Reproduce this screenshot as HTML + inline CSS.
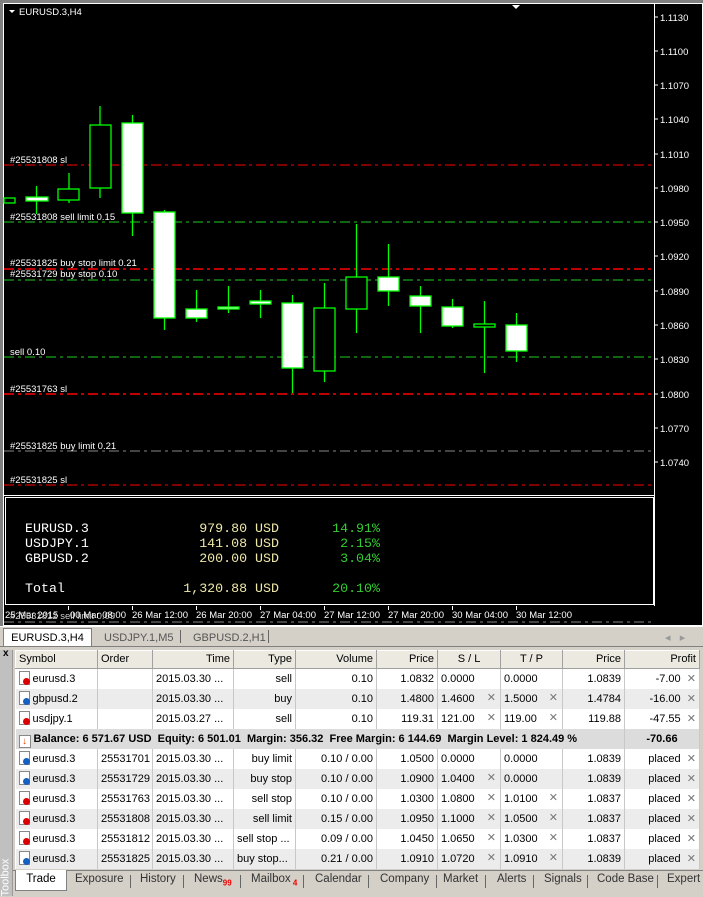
<!DOCTYPE html>
<html><head><meta charset="utf-8"><style>
*{margin:0;padding:0;box-sizing:border-box}
body{width:703px;height:896px;overflow:hidden;background:#d4d0c8;font-family:"Liberation Sans",sans-serif;font-size:11px;position:relative}
#chart{position:absolute;left:0;top:0}
.tabs1{position:absolute;left:0;top:626px;width:703px;height:20px;background:#d4d0c8;border-top:1px solid #fff}
.tab{position:absolute;top:3px;height:17px;line-height:16px;font-size:11px;color:#555}
table{position:absolute;left:15px;top:650px;border-collapse:collapse;width:684px;table-layout:fixed;background:#fff}
td,th{height:20px;line-height:18px;border-right:1px solid #c8c8c8;font-size:11px;padding:0 3px;white-space:nowrap;overflow:hidden;color:#000;font-weight:normal;text-align:right}
th{height:18px;line-height:15px;background:#ece9e1;border:1px solid #a0a0a0;border-top:1px solid #fff;border-left:1px solid #fff}
tr.g td{background:#ececec}
td.l,th.l{text-align:left}
td.s{position:relative;text-align:left}
.x{color:#777;position:absolute;right:4px;top:0}
.ic{display:inline-block;width:11px;height:14px;border:1px solid #888;background:#fff;vertical-align:-3px;margin-right:3px;position:relative}
.ic i{position:absolute;left:3px;top:6px;width:7px;height:7px;border-radius:50%}
.r i{background:#d00}.b i{background:#1560c0}
.bal td{background:#dcdcdc;font-weight:bold}
.bottom{position:absolute;left:13px;top:870px;width:690px;height:21px;border-top:1px solid #808080}
.bt{position:absolute;top:2px;font-size:11.5px;color:#333}
.sep{position:absolute;top:4px;width:1px;height:13px;background:#666}
</style></head><body>
<svg id="chart" width="703" height="626" xmlns="http://www.w3.org/2000/svg" font-family="Liberation Sans, sans-serif">
<rect x="0" y="0" width="703" height="626" fill="#000"/>
<rect x="0" y="0" width="703" height="3" fill="#808080"/>
<rect x="0" y="0" width="3" height="626" fill="#808080"/>
<rect x="3.5" y="3.5" width="699" height="622" fill="none" stroke="#fff" stroke-width="1"/>
<line x1="654.5" y1="4" x2="654.5" y2="606" stroke="#fff"/>
<rect x="5.5" y="497.5" width="648" height="107" fill="none" stroke="#fff"/>
<line x1="4" y1="495.5" x2="654" y2="495.5" stroke="#fff"/>
<g stroke-width="1.3" fill="none">
<line x1="4" y1="165" x2="654" y2="165" stroke="#f00" stroke-dasharray="10,4,3,4" stroke-width="1"/>
<line x1="4" y1="222" x2="654" y2="222" stroke="#2c2" stroke-dasharray="10,4,3,4" stroke-width="1"/>
<line x1="4" y1="269" x2="654" y2="269" stroke="#f00" stroke-dasharray="10,4,3,4" stroke-width="1.5"/>
<line x1="4" y1="280" x2="654" y2="280" stroke="#2c2" stroke-dasharray="10,4,3,4" stroke-width="1"/>
<line x1="4" y1="357" x2="654" y2="357" stroke="#2c2" stroke-dasharray="10,4,3,4" stroke-width="1"/>
<line x1="4" y1="394" x2="654" y2="394" stroke="#f00" stroke-dasharray="10,4,3,4" stroke-width="1.5"/>
<line x1="4" y1="451" x2="654" y2="451" stroke="#888" stroke-dasharray="10,4,3,4" stroke-width="1"/>
<line x1="4" y1="485" x2="654" y2="485" stroke="#f00" stroke-dasharray="10,4,3,4" stroke-width="1"/>
</g>
<g stroke="#0f0" stroke-width="1.3">
<line x1="36.5" y1="186" x2="36.5" y2="214"/><line x1="69" y1="173" x2="69" y2="203"/>
<line x1="100" y1="106" x2="100" y2="198"/><line x1="132.5" y1="115" x2="132.5" y2="236"/>
<line x1="164.5" y1="210" x2="164.5" y2="330"/><line x1="196.5" y1="290" x2="196.5" y2="322"/>
<line x1="228.5" y1="286" x2="228.5" y2="313"/><line x1="260.5" y1="290" x2="260.5" y2="318"/>
<line x1="292.5" y1="295" x2="292.5" y2="393"/><line x1="324.5" y1="283" x2="324.5" y2="382"/>
<line x1="356.5" y1="224" x2="356.5" y2="333"/><line x1="388.5" y1="244" x2="388.5" y2="306"/>
<line x1="420.5" y1="286" x2="420.5" y2="333"/><line x1="452.5" y1="299" x2="452.5" y2="328"/>
<line x1="484.5" y1="301" x2="484.5" y2="373"/><line x1="516.5" y1="313" x2="516.5" y2="362"/>
</g>
<g stroke="#0f0" stroke-width="1.3">
<rect x="4" y="198" width="11" height="5" fill="#000"/>
<rect x="26" y="197" width="22" height="4" fill="#fff"/>
<rect x="58" y="189" width="21" height="11" fill="#000"/>
<rect x="90" y="125" width="21" height="63" fill="#000"/>
<rect x="122" y="123" width="21" height="90" fill="#fff"/>
<rect x="154" y="212" width="21" height="106" fill="#fff"/>
<rect x="186" y="309" width="21" height="9" fill="#fff"/>
<rect x="218" y="307" width="21" height="2" fill="#fff"/>
<rect x="250" y="301" width="21" height="3" fill="#fff"/>
<rect x="282" y="303" width="21" height="65" fill="#fff"/>
<rect x="314" y="308" width="21" height="63" fill="#000"/>
<rect x="346" y="277" width="21" height="32" fill="#000"/>
<rect x="378" y="277" width="21" height="14" fill="#fff"/>
<rect x="410" y="296" width="21" height="10" fill="#fff"/>
<rect x="442" y="307" width="21" height="19" fill="#fff"/>
<rect x="474" y="324" width="21" height="3" fill="#000"/>
<rect x="506" y="325" width="21" height="26" fill="#fff"/>
</g>
<g fill="#fff" font-size="9.5">
<path d="M9 10 L15 10 L12 13Z"/>
<text x="19" y="15">EURUSD.3,H4</text>
<text x="10" y="163">#25531808 sl</text>
<text x="10" y="220">#25531808 sell limit 0.15</text>
<text x="10" y="266">#25531825 buy stop limit 0.21</text>
<text x="10" y="277">#25531729 buy stop 0.10</text>
<text x="10" y="355">sell 0.10</text>
<text x="10" y="392">#25531763 sl</text>
<text x="10" y="449">#25531825 buy limit 0.21</text>
<text x="10" y="483">#25531825 sl</text>
</g>
<path d="M512 5 L520 5 L516 9Z" fill="#fff"/>
<g fill="#fff" font-size="9.5">
<text x="660" y="21">1.1130</text><text x="660" y="55">1.1100</text><text x="660" y="89">1.1070</text>
<text x="660" y="123">1.1040</text><text x="660" y="158">1.1010</text><text x="660" y="192">1.0980</text>
<text x="660" y="226">1.0950</text><text x="660" y="260">1.0920</text><text x="660" y="295">1.0890</text>
<text x="660" y="329">1.0860</text><text x="660" y="363">1.0830</text><text x="660" y="398">1.0800</text>
<text x="660" y="432">1.0770</text><text x="660" y="466">1.0740</text>
</g>
<g stroke="#fff"><line x1="654" y1="17" x2="658" y2="17"/><line x1="654" y1="51" x2="658" y2="51"/><line x1="654" y1="85" x2="658" y2="85"/><line x1="654" y1="119" x2="658" y2="119"/><line x1="654" y1="154" x2="658" y2="154"/><line x1="654" y1="188" x2="658" y2="188"/><line x1="654" y1="222" x2="658" y2="222"/><line x1="654" y1="256" x2="658" y2="256"/><line x1="654" y1="291" x2="658" y2="291"/><line x1="654" y1="325" x2="658" y2="325"/><line x1="654" y1="359" x2="658" y2="359"/><line x1="654" y1="394" x2="658" y2="394"/><line x1="654" y1="428" x2="658" y2="428"/><line x1="654" y1="462" x2="658" y2="462"/></g>
<g font-family="Liberation Mono, monospace" font-size="13.3">
<g fill="#fff"><text x="25" y="532">EURUSD.3</text><text x="25" y="547">USDJPY.1</text><text x="25" y="562">GBPUSD.2</text><text x="25" y="592">Total</text></g>
<g fill="#eee8aa" text-anchor="end"><text x="279" y="532">979.80 USD</text><text x="279" y="547">141.08 USD</text><text x="279" y="562">200.00 USD</text><text x="279" y="592">1,320.88 USD</text></g>
<g fill="#3c3" text-anchor="end"><text x="380" y="532">14.91%</text><text x="380" y="547">2.15%</text><text x="380" y="562">3.04%</text><text x="380" y="592">20.10%</text></g>
</g>
<g stroke="#fff"><line x1="68.5" y1="606" x2="68.5" y2="610"/><line x1="132.5" y1="606" x2="132.5" y2="610"/><line x1="196.5" y1="606" x2="196.5" y2="610"/><line x1="260.5" y1="606" x2="260.5" y2="610"/><line x1="324.5" y1="606" x2="324.5" y2="610"/><line x1="388.5" y1="606" x2="388.5" y2="610"/><line x1="452.5" y1="606" x2="452.5" y2="610"/><line x1="516.5" y1="606" x2="516.5" y2="610"/></g>
<line x1="4" y1="622" x2="654" y2="622" stroke="#888" stroke-dasharray="10,4,3,4"/>
<g fill="#fff" font-size="9.5">
<text x="5" y="618">25 Mar 2015</text><text x="10" y="619" fill="#ccc">#25531812 sell limit 0.09</text><text x="70" y="618">00 Mar 08:00</text>
<text x="132" y="618">26 Mar 12:00</text><text x="196" y="618">26 Mar 20:00</text><text x="260" y="618">27 Mar 04:00</text>
<text x="324" y="618">27 Mar 12:00</text><text x="388" y="618">27 Mar 20:00</text><text x="452" y="618">30 Mar 04:00</text><text x="516" y="618">30 Mar 12:00</text>
</g>
</svg>
<div class="tabs1">
<div style="position:absolute;left:3px;top:1px;width:89px;height:19px;background:#fff;border:1px solid #808080;border-bottom:none;font-size:11px;line-height:18px;text-align:center;color:#000">EURUSD.3,H4</div>
<div class="tab" style="left:104px">USDJPY.1,M5</div>
<div class="sep" style="left:180px;top:3px"></div>
<div class="tab" style="left:193px">GBPUSD.2,H1</div>
<div class="sep" style="left:268px;top:3px"></div>
<div class="tab" style="left:665px;color:#999">◂ &nbsp; ▸</div>
</div>
<div style="position:absolute;left:0;top:646px;width:703px;height:4px;background:#d4d0c8;border-top:1px solid #808080"></div>
<div style="position:absolute;left:0;top:650px;width:13px;height:246px;background:#c0c0c0;border-right:1px solid #999"></div>
<div style="position:absolute;left:3px;top:648px;font-size:10px;font-weight:bold">x</div>
<div style="position:absolute;left:-16px;top:868px;transform:rotate(-90deg);font-size:11px;color:#fff;width:44px;height:13px;line-height:13px">Toolbox</div>
<table>
<colgroup><col style="width:82px"><col style="width:55px"><col style="width:81px"><col style="width:62px"><col style="width:81px"><col style="width:61px"><col style="width:63px"><col style="width:62px"><col style="width:62px"><col style="width:75px"></colgroup>
<tr><th class="l">Symbol</th><th class="l">Order</th><th>Time</th><th>Type</th><th>Volume</th><th>Price</th><th style="text-align:center">S / L</th><th style="text-align:center">T / P</th><th>Price</th><th>Profit</th></tr>
<tr><td class="l"><span class="ic r"><i></i></span>eurusd.3</td><td></td><td class="l">2015.03.30 ...</td><td>sell</td><td>0.10</td><td>1.0832</td><td class="s">0.0000</td><td class="s">0.0000</td><td>1.0839</td><td>-7.00 &nbsp;<span style="color:#777">✕</span></td></tr>
<tr class="g"><td class="l"><span class="ic b"><i></i></span>gbpusd.2</td><td></td><td class="l">2015.03.30 ...</td><td>buy</td><td>0.10</td><td>1.4800</td><td class="s">1.4600<span class="x">✕</span></td><td class="s">1.5000<span class="x">✕</span></td><td>1.4784</td><td>-16.00 &nbsp;<span style="color:#777">✕</span></td></tr>
<tr><td class="l"><span class="ic r"><i></i></span>usdjpy.1</td><td></td><td class="l">2015.03.27 ...</td><td>sell</td><td>0.10</td><td>119.31</td><td class="s">121.00<span class="x">✕</span></td><td class="s">119.00<span class="x">✕</span></td><td>119.88</td><td>-47.55 &nbsp;<span style="color:#777">✕</span></td></tr>
<tr class="bal"><td colspan="9" class="l"><span style="display:inline-block;width:12px;height:13px;border:1px solid #888;background:#fff;color:#e04000;font-size:10px;line-height:11px;text-align:center;vertical-align:-2px">↓</span> Balance: 6 571.67 USD&nbsp; Equity: 6 501.01&nbsp; Margin: 356.32&nbsp; Free Margin: 6 144.69&nbsp; Margin Level: 1 824.49 %</td><td style="text-align:center">-70.66</td></tr>
<tr><td class="l"><span class="ic b"><i></i></span>eurusd.3</td><td class="l">25531701</td><td class="l">2015.03.30 ...</td><td>buy limit</td><td>0.10 / 0.00</td><td>1.0500</td><td class="s">0.0000</td><td class="s">0.0000</td><td>1.0839</td><td>placed &nbsp;<span style="color:#777">✕</span></td></tr>
<tr class="g"><td class="l"><span class="ic b"><i></i></span>eurusd.3</td><td class="l">25531729</td><td class="l">2015.03.30 ...</td><td>buy stop</td><td>0.10 / 0.00</td><td>1.0900</td><td class="s">1.0400<span class="x">✕</span></td><td class="s">0.0000</td><td>1.0839</td><td>placed &nbsp;<span style="color:#777">✕</span></td></tr>
<tr><td class="l"><span class="ic r"><i></i></span>eurusd.3</td><td class="l">25531763</td><td class="l">2015.03.30 ...</td><td>sell stop</td><td>0.10 / 0.00</td><td>1.0300</td><td class="s">1.0800<span class="x">✕</span></td><td class="s">1.0100<span class="x">✕</span></td><td>1.0837</td><td>placed &nbsp;<span style="color:#777">✕</span></td></tr>
<tr class="g"><td class="l"><span class="ic r"><i></i></span>eurusd.3</td><td class="l">25531808</td><td class="l">2015.03.30 ...</td><td>sell limit</td><td>0.15 / 0.00</td><td>1.0950</td><td class="s">1.1000<span class="x">✕</span></td><td class="s">1.0500<span class="x">✕</span></td><td>1.0837</td><td>placed &nbsp;<span style="color:#777">✕</span></td></tr>
<tr><td class="l"><span class="ic r"><i></i></span>eurusd.3</td><td class="l">25531812</td><td class="l">2015.03.30 ...</td><td class="l">sell stop ...</td><td>0.09 / 0.00</td><td>1.0450</td><td class="s">1.0650<span class="x">✕</span></td><td class="s">1.0300<span class="x">✕</span></td><td>1.0837</td><td>placed &nbsp;<span style="color:#777">✕</span></td></tr>
<tr class="g"><td class="l"><span class="ic b"><i></i></span>eurusd.3</td><td class="l">25531825</td><td class="l">2015.03.30 ...</td><td class="l">buy stop...</td><td>0.21 / 0.00</td><td>1.0910</td><td class="s">1.0720<span class="x">✕</span></td><td class="s">1.0910<span class="x">✕</span></td><td>1.0839</td><td>placed &nbsp;<span style="color:#777">✕</span></td></tr>
</table>
<div class="bottom">
<div style="position:absolute;left:2px;top:-1px;width:52px;height:21px;background:#fff;border:1px solid #808080;border-top:none;text-align:center;line-height:19px;font-size:11.5px">Trade</div>
<div class="bt" style="left:62px">Exposure</div><div class="sep" style="left:117px"></div>
<div class="bt" style="left:127px">History</div><div class="sep" style="left:170px"></div>
<div class="bt" style="left:181px">News<sub style="color:#e00;font-size:8px;font-weight:bold">99</sub></div><div class="sep" style="left:227px"></div>
<div class="bt" style="left:238px">Mailbox<sub style="color:#e00;font-size:8px;font-weight:bold"> 4</sub></div><div class="sep" style="left:290px"></div>
<div class="bt" style="left:302px">Calendar</div><div class="sep" style="left:355px"></div>
<div class="bt" style="left:367px">Company</div><div class="sep" style="left:423px"></div>
<div class="bt" style="left:430px">Market</div><div class="sep" style="left:472px"></div>
<div class="bt" style="left:484px">Alerts</div><div class="sep" style="left:520px"></div>
<div class="bt" style="left:531px">Signals</div><div class="sep" style="left:574px"></div>
<div class="bt" style="left:584px">Code Base</div><div class="sep" style="left:644px"></div>
<div class="bt" style="left:654px">Expert</div>
</div>
</body></html>
